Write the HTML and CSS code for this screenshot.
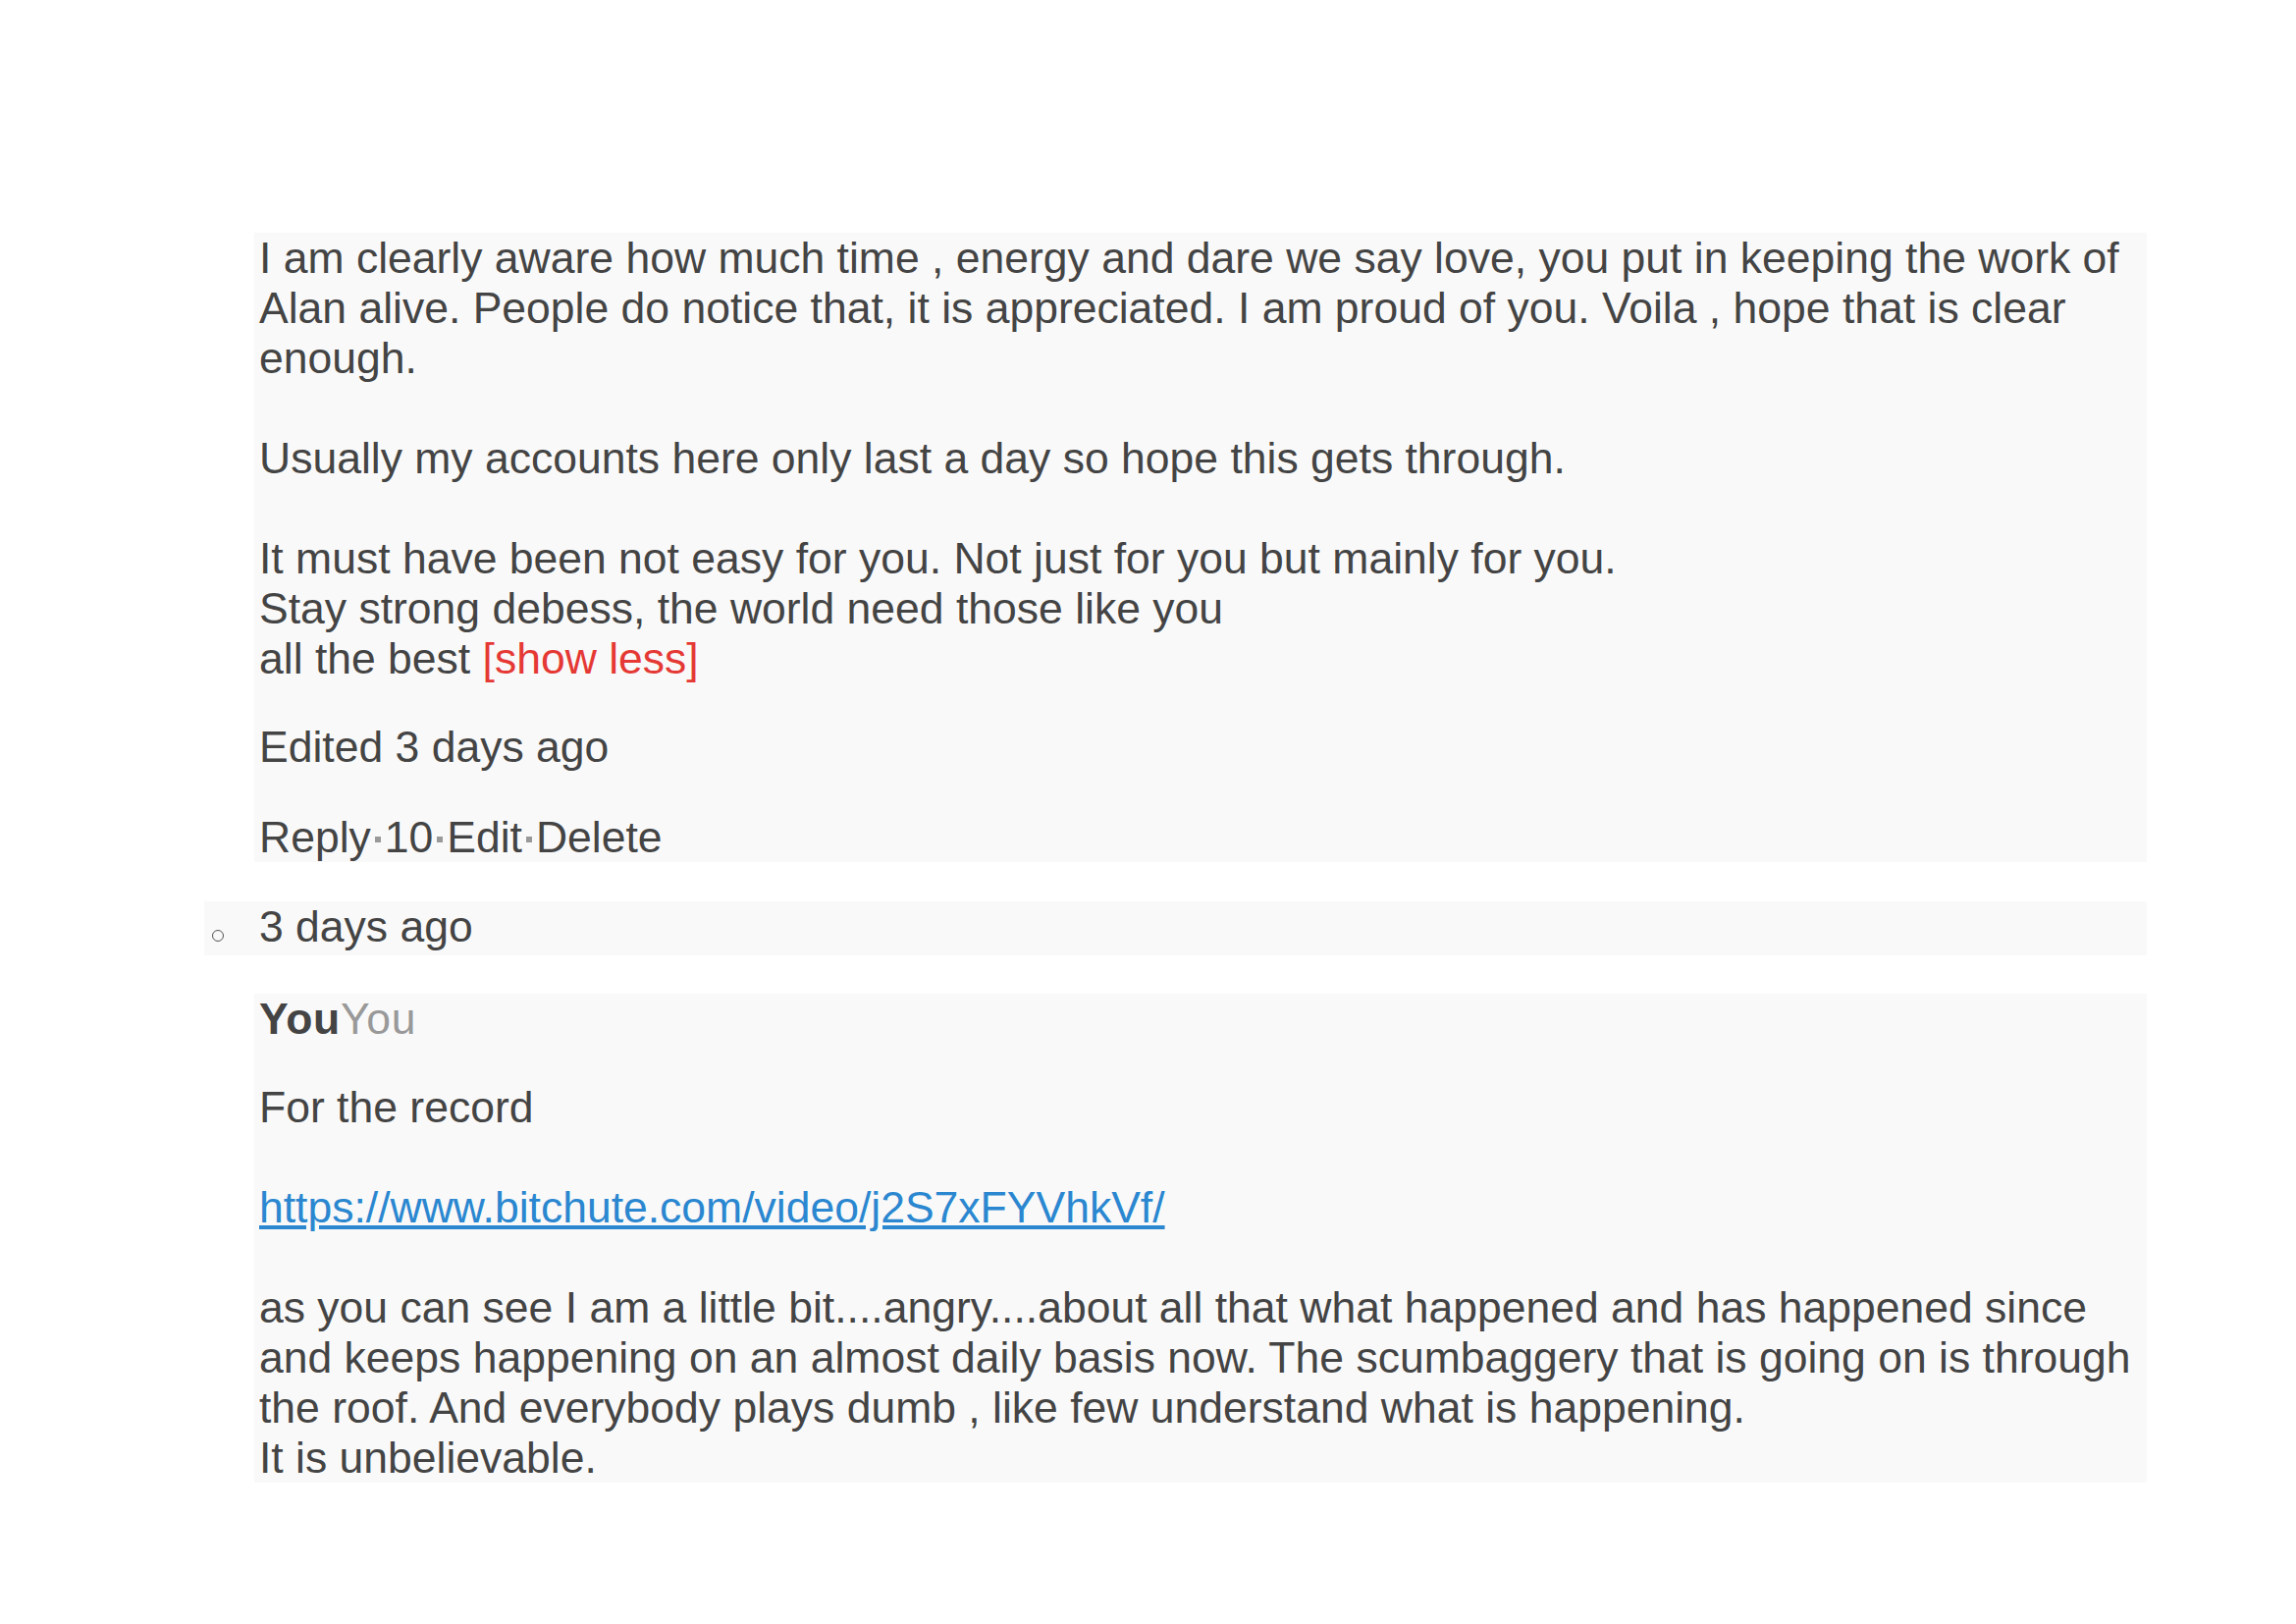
FILE: index.html
```html
<!DOCTYPE html>
<html lang="en">
<head>
    <meta charset="UTF-8">
    <meta name="viewport" content="width=device-width, initial-scale=1.0">
    <title>Comments</title>
    <link rel="stylesheet" href="styles.css">
</head>
<body>
    <div class="thread">
        <div class="comment-box">
            <div class="comment-text">
                <p>I am clearly aware how much time , energy and dare we say love, you put in keeping the work of Alan alive. People do notice that, it is appreciated. I am proud of you. Voila , hope that is clear enough.</p>
                <p>Usually my accounts here only last a day so hope this gets through.</p>
                <p>It must have been not easy for you. Not just for you but mainly for you.<br>
                Stay strong debess, the world need those like you<br>
                all the best <a href="#" class="toggle">[show less]</a></p>
            </div>
            <div class="edited">Edited 3 days ago</div>
            <div class="actions">
                <span>Reply</span><span class="sep"></span><span>10</span><span class="sep"></span><span>Edit</span><span class="sep"></span><span>Delete</span>
            </div>
        </div>

        <div class="reply-meta">
            <span class="bullet"></span>
            <span>3 days ago</span>
        </div>

        <div class="comment-box">
            <div class="author"><b>You</b><span class="author-tag">You</span></div>
            <div class="comment-text reply-text">
                <p>For the record</p>
                <p><a href="#" class="link">https://www.bitchute.com/video/j2S7xFYVhkVf/</a></p>
                <p>as you can see I am a little bit....angry....about all that what happened and has happened since and keeps happening on an almost daily basis now. The scumbaggery that is going on is through the roof. And everybody plays dumb , like few understand what is happening.<br>
                It is unbelievable.</p>
            </div>
        </div>
    </div>
</body>
</html>
```

FILE: styles.css
```css
body {
    margin: 0;
    background: #fff;
    font-family: "Liberation Sans", Arial, sans-serif;
    font-size: 44.5px;
    line-height: 51px;
    color: #444;
}
.thread {
    width: 1979px;
    margin-left: 208px;
    padding-top: 237px;
}
.comment-box {
    margin-left: 51px;
    padding-left: 5px;
    background: #f9f9f9;
}
.comment-text p {
    margin: 0 0 51px;
}
.comment-text p:last-child {
    margin-bottom: 0;
}
.toggle {
    color: #e53935;
    text-decoration: none;
}
.edited {
    margin-top: 39px;
}
.actions {
    margin-top: 41px;
    display: flex;
    align-items: center;
}
.sep {
    display: inline-block;
    width: 6px;
    height: 6px;
    margin: 4px 4px 0;
    background: #999;
}
.reply-meta {
    margin-top: 40px;
    padding-bottom: 4px;
    display: flex;
    align-items: baseline;
    background: #f9f9f9;
}
.bullet {
    display: inline-block;
    width: 10px;
    height: 10px;
    margin-left: 8px;
    margin-right: 36px;
    border: 1px solid #555;
    border-radius: 50%;
}
.reply-meta + .comment-box {
    margin-top: 39px;
}
.author {
    letter-spacing: 0.75px;
}
.author b {
    font-weight: bold;
}
.author-tag {
    color: #999;
}
.reply-text {
    margin-top: 39px;
}
.link {
    color: #2a87d0;
    text-decoration: underline;
}
```
